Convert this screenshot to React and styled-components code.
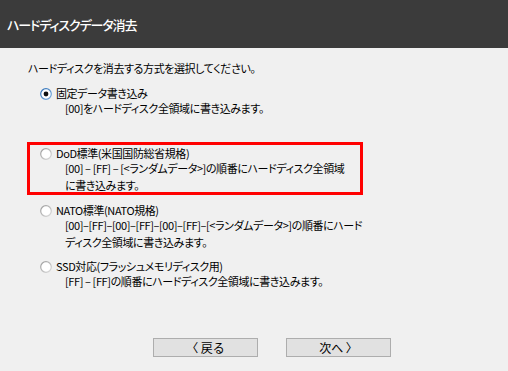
import styled, { createGlobalStyle } from 'styled-components'

const GlobalStyle = createGlobalStyle`
    html, body, #root {
        margin: 0;
        height: 100%;
    }
    body {
        background: #f0f0f0;
        font-family: 'Noto Sans CJK JP', 'Noto Sans', sans-serif;
        color: #000;
    }
`

const Window = styled.div`
    display: flex;
    flex-direction: column;
    height: 100%;
    background: #f0f0f0;
`

const Header = styled.div`
    height: 48px;
    flex: none;
    background: #3b3b3b;
    color: #fff;
    display: flex;
    align-items: center;
    padding: 0 0 0 7px;
    box-sizing: border-box;
    h1 {
        margin: 1px 0 0;
        font-size: 13px;
        font-weight: 500;
        font-feature-settings: 'palt';
        letter-spacing: -1.1px;
    }
`

const Body = styled.div`
    flex: 1;
    padding: 13px 0 0 28px;
    font-size: 11px;
    font-feature-settings: 'palt';
    letter-spacing: -0.4px;
`

const Instruction = styled.p`
    margin: 0 0 12px;
    line-height: 14px;
`

const Option = styled.div`
    display: grid;
    grid-template-columns: 12px auto;
    column-gap: 4px;
    margin-left: 12px;
    margin-top: ${({ $gap }) => $gap || 0}px;
    white-space: nowrap;
`

const Label = styled.div`
    line-height: 13px;
`

const Desc = styled.div`
    grid-column: 2;
    margin-left: 9px;
    line-height: 17px;
    margin-top: 0;
`

const Highlight = styled.div`
    box-sizing: border-box;
    width: 336px;
    margin: 25px 0 0 -1px;
    padding: 2px 0 0;
    border: 3px solid #ff0000;
    ${Option} {
        margin-left: 10px;
        margin-bottom: -2px;
    }
`

const RadioBox = styled.div`
    grid-row: 1;
    display: flex;
    align-items: center;
    height: 13px;
`

const Radio = ({ checked }) => (
    <RadioBox>
        <svg width="12" height="12" viewBox="0 0 12 12">
            <defs>
                <linearGradient id={checked ? 'rc' : 'ru'} x1="0" y1="0" x2="1" y2="1">
                    <stop offset="0" stopColor={checked ? '#2a6cb4' : '#9a9a9a'} />
                    <stop offset="1" stopColor={checked ? '#7fb0e0' : '#dcdcdc'} />
                </linearGradient>
            </defs>
            <circle cx="6" cy="6" r="5.3" fill="#fff" stroke={`url(#${checked ? 'rc' : 'ru'})`} strokeWidth="1.2" />
            {checked && <circle cx="6" cy="6" r="2.4" fill="#111" />}
        </svg>
    </RadioBox>
)

const Buttons = styled.div`
    display: flex;
    gap: 28px;
    padding: 0 0 14px 153px;
`

const Button = styled.button`
    width: 105px;
    height: 19px;
    padding: 0;
    background: #e1e1e1;
    border: 1px solid #adadad;
    font-family: 'Noto Sans CJK JP', 'Noto Sans', sans-serif;
    font-size: 12px;
    line-height: 17px;
    color: #000;
`

export default function App() {
    return (
        <Window>
            <GlobalStyle />
            <Header>
                <h1>ハードディスクデータ消去</h1>
            </Header>
            <Body>
                <Instruction>ハードディスクを消去する方式を選択してください。</Instruction>
                <Option>
                    <Radio checked />
                    <Label>固定データ書き込み</Label>
                    <Desc>[00]をハードディスク全領域に書き込みます。</Desc>
                </Option>
                <Highlight>
                    <Option>
                        <Radio />
                        <Label>DoD標準(米国国防総省規格)</Label>
                        <Desc>
                            [00] – [FF] – [&lt;ランダムデータ&gt;]の順番にハードディスク全領域
                            <br />
                            に書き込みます。
                        </Desc>
                    </Option>
                </Highlight>
                <Option $gap={9}>
                    <Radio />
                    <Label>NATO標準(NATO規格)</Label>
                    <Desc>
                        [00]–[FF]–[00]–[FF]–[00]–[FF]–[&lt;ランダムデータ&gt;]の順番にハード
                        <br />
                        ディスク全領域に書き込みます。
                    </Desc>
                </Option>
                <Option $gap={9}>
                    <Radio />
                    <Label>SSD対応(フラッシュメモリディスク用)</Label>
                    <Desc>[FF] – [FF]の順番にハードディスク全領域に書き込みます。</Desc>
                </Option>
            </Body>
            <Buttons>
                <Button>〈 戻る</Button>
                <Button>次へ 〉</Button>
            </Buttons>
        </Window>
    )
}
